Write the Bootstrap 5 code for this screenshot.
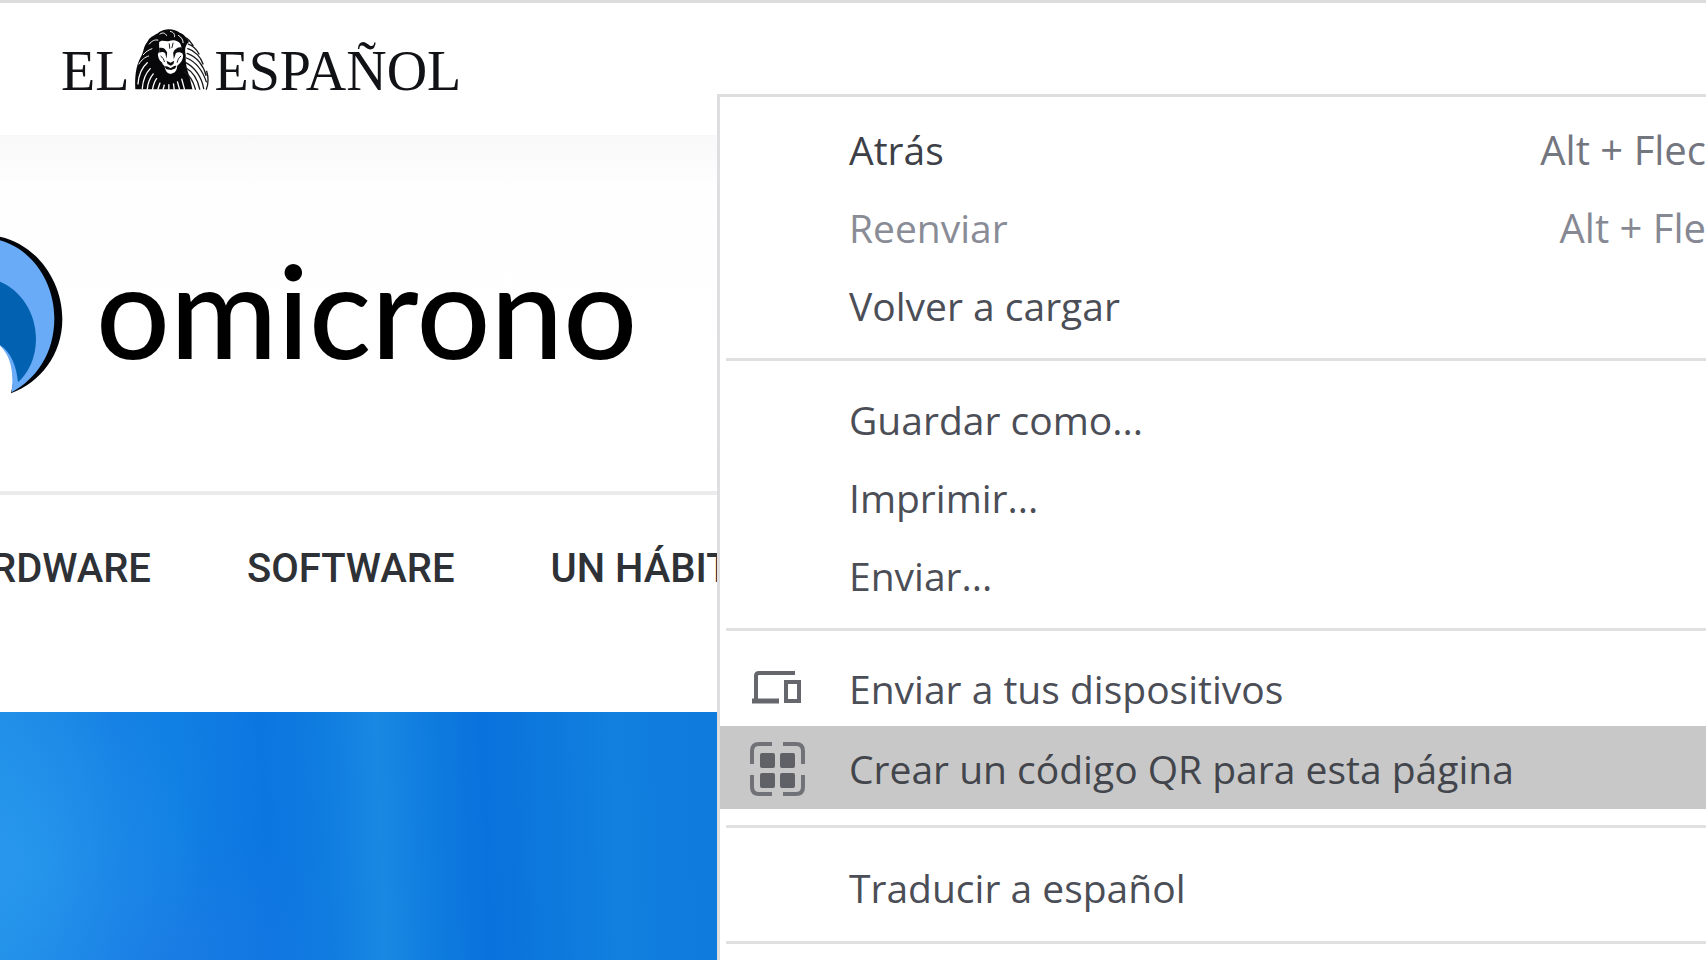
<!DOCTYPE html>
<html lang="es">
<head>
<meta charset="utf-8">
<meta name="viewport" content="width=device-width, initial-scale=1">
<title>Omicrono - El Español</title>
<link href="https://cdn.jsdelivr.net/npm/bootstrap@5.3.0/dist/css/bootstrap.min.css" rel="stylesheet">
<style>
  body { font-family: "Open Sans", "Noto Sans", sans-serif; background: #fff; }
  a { text-decoration: none; color: inherit; }
  .site-top { border-top: 3px solid #dcdcdc; height: 135px; padding: 0 61px 0; }
  .paper-logo { font-family: "Liberation Serif", serif; font-size: 56px; line-height: 60px; color: #111216; padding-top: 25px; gap: 5px; }
  .brand-band { height: 360px; border-bottom: 4px solid #ebebeb; background: linear-gradient(#f8f8f8, #fefefe 50px, #fff); }
  .brand-word { font-family: Lato, sans-serif; font-size: 130px; line-height: 150px; color: #000; margin-left: 29px; padding-bottom: 8px; }
  .sections { height: 217px; gap: 96px; padding-top: 44px; margin-left: -9px; font-family: Roboto, sans-serif; font-weight: 500; font-size: 40px; line-height: 60px; color: #2e3136; }
  .hero-photo {
    background:
      radial-gradient(ellipse 200px 220px at 0 150px, rgba(44,156,240,.7), rgba(44,156,240,0)),
      radial-gradient(ellipse 180px 120px at 180px 240px, rgba(30,120,228,.6), rgba(30,120,228,0)),
      linear-gradient(88deg, #1e8ce5 0, #1a87e4 60px, #147fe3 120px, #1180e4 180px, #0c76e0 270px, #0f7ce0 330px, #1988e2 385px, #0e7bdf 440px, #0a72dc 490px, #0d79dd 560px, #1180de 620px, #0f7bdd 700px, #0f7bdd 100%);
  }
  .context-menu { left: 717px; top: 94px; right: 0; bottom: 0; background: #fff; border: solid #dedee0; border-width: 3px 0 0 3px; padding-top: 14px; font-size: 39px; overflow: hidden; }
  .menu-row { height: 78px; width: 100%; border: 0; background: none; padding: 0 0 0 29px; color: #4b4e56; line-height: 54px; white-space: nowrap; text-align: left; }
  .menu-row .slot { width: 56px; height: 56px; margin-right: 44px; flex: none; }
  .menu-row:disabled { color: #898c96; }
  .menu-row.dark-row { color: #3d4047; }
  .menu-row kbd { all: unset; color: #74767f; margin-left: auto; font-size: 40px; }
  .menu-row:disabled kbd { color: #868994; }
  .menu-row.tight { height: 75px; }
  .menu-row.picked { height: 83px; padding-top: 2px; background: #c8c8c8; color: #42454b; margin-bottom: 16px; }
  .menu-row.tall { height: 80px; }
  .menu-line { margin: 13px 0 20px 6px; border: 0; height: 3px; background: #e0e0e1; opacity: 1; }
</style>
</head>
<body class="vh-100 overflow-hidden position-relative d-flex flex-column">
<header class="site-top flex-shrink-0">
  <a href="#" class="paper-logo d-inline-flex align-items-baseline">
    <span>EL</span>
    <svg width="75" height="62" viewBox="0 0 226 186" aria-hidden="true">
      <path fill="#08080a" d="M4 184C2 150 5 115 20 88C30 72 28 55 40 42C48 24 66 22 76 12C92 0 122 0 138 14C154 20 160 32 166 42C154 50 152 66 156 82C154 110 162 130 168 150L176 184Z"/>
      <g fill="none" stroke="#fff" stroke-width="4" stroke-linecap="round">
        <path d="M12 168C14 140 24 118 40 104M25 182C27 155 36 135 49 122M40 184C42 164 48 150 58 138M56 184C58 172 62 160 68 152M72 184L78 166M88 184L91 172M105 184V170M121 184L119 168M137 184L131 162M152 184L144 154"/>
        <path stroke-width="3" d="M15 108C24 94 32 88 44 84M28 80C36 70 44 66 54 62M46 48C54 38 62 34 72 36M78 18C86 12 94 14 98 22M110 10C120 12 124 20 122 26M134 22C144 28 148 36 148 44"/>
      </g>
      <g fill="none" stroke="#18181b" stroke-width="4" stroke-linecap="round">
        <path d="M158 30C170 38 172 46 178 52M164 48C180 54 190 66 196 78M162 62C184 68 202 88 208 108M160 76C190 86 210 114 217 142M158 90C188 102 208 132 218 162M156 104C184 118 204 148 210 182M154 118C178 132 192 154 198 184M152 132C170 144 180 164 185 184M219 130C225 150 224 168 218 184"/>
      </g>
      <path fill="#fff" d="M76 42C86 34 96 42 106 39C118 34 132 36 140 48C146 62 142 70 148 82C148 98 138 108 130 114C130 128 122 136 110 138C98 136 94 126 92 114C82 106 72 92 72 78C80 70 74 54 76 42Z"/>
      <path fill="#0c0c0e" d="M76 60C86 56 96 62 100 74L98 92L94 76C88 70 82 72 76 74ZM144 58C134 56 122 62 118 74L120 94L126 76C132 70 140 74 146 76ZM98 98L110 104L121 98L119 108L111 113L101 108ZM92 116C100 112 106 120 110 120C116 120 120 112 128 114L124 122L112 126L98 124Z"/>
      <path fill="none" stroke="#18181b" stroke-width="3" d="M80 84C86 88 90 94 92 102M142 84C136 88 132 94 130 104M106 46L108 62M118 44L114 60M76 98L86 106"/>
    </svg>
    <span>ESPAÑOL</span>
  </a>
</header>
<section class="brand-band flex-shrink-0 d-flex align-items-center">
  <svg width="67" height="160" viewBox="0 -6 201 480" class="flex-shrink-0 overflow-visible" aria-hidden="true">
    <path fill="#020407" d="M0 5C112 30 187 140 187 252C187 360 120 442 33 475L40 440L0 30Z"/>
    <path fill="#6aabf7" d="M0 16C98 44 163 142 163 250C163 352 112 430 35 472C42 410 32 362 0 332Z"/>
    <path fill="#0261b1" d="M0 140C62 166 108 232 108 312C108 368 84 416 54 442C50 396 34 352 0 330Z"/>
  </svg>
  <h1 class="brand-word mb-0">omicrono</h1>
</section>
<nav class="sections flex-shrink-0 d-flex text-nowrap align-items-start">
  <a href="#">RDWARE</a><a href="#">SOFTWARE</a><a href="#">UN HÁBIT</a>
</nav>
<main class="hero-photo flex-grow-1"></main>

<div class="context-menu position-absolute" role="menu">
  <button class="menu-row dark-row d-flex align-items-center" role="menuitem"><span class="slot"></span>Atrás<kbd>Alt + Flec</kbd></button>
  <button class="menu-row d-flex align-items-center" role="menuitem" disabled><span class="slot"></span>Reenviar<kbd>Alt + Fle</kbd></button>
  <button class="menu-row d-flex align-items-center" role="menuitem"><span class="slot"></span>Volver a cargar</button>
  <hr class="menu-line">
  <button class="menu-row d-flex align-items-center" role="menuitem"><span class="slot"></span>Guardar como...</button>
  <button class="menu-row d-flex align-items-center" role="menuitem"><span class="slot"></span>Imprimir...</button>
  <button class="menu-row d-flex align-items-center" role="menuitem"><span class="slot"></span>Enviar...</button>
  <hr class="menu-line">
  <button class="menu-row tight d-flex align-items-center" role="menuitem">
    <svg class="slot" viewBox="0 0 56 56" fill="none" stroke="#65676c" aria-hidden="true">
      <path stroke-width="4" d="M46 12H10Q7 12 7 15V40"/><path stroke-width="5" d="M3 40H30"/>
      <rect x="37" y="21" width="13" height="19" stroke-width="4"/>
    </svg>Enviar a tus dispositivos</button>
  <button class="menu-row picked d-flex align-items-center" role="menuitem">
    <svg class="slot" viewBox="0 0 56 56" fill="none" stroke="#707277" stroke-width="4" aria-hidden="true">
      <path d="M23 3H10Q3 3 3 10V23M34 3H47Q54 3 54 10V23M3 34V46Q3 53 10 53H23M54 34V46Q54 53 47 53H34"/>
      <g fill="#5f6166" stroke="none"><rect x="11" y="12" width="15" height="15" rx="2"/><rect x="31" y="12" width="15" height="15" rx="2"/><rect x="11" y="32" width="15" height="15" rx="2"/><rect x="31" y="32" width="15" height="15" rx="2"/></g>
    </svg>Crear un código QR para esta página</button>
  <hr class="menu-line">
  <button class="menu-row tall d-flex align-items-center" role="menuitem"><span class="slot"></span>Traducir a español</button>
  <hr class="menu-line">
</div>
<script src="https://cdn.jsdelivr.net/npm/bootstrap@5.3.0/dist/js/bootstrap.bundle.min.js"></script>
</body>
</html>
